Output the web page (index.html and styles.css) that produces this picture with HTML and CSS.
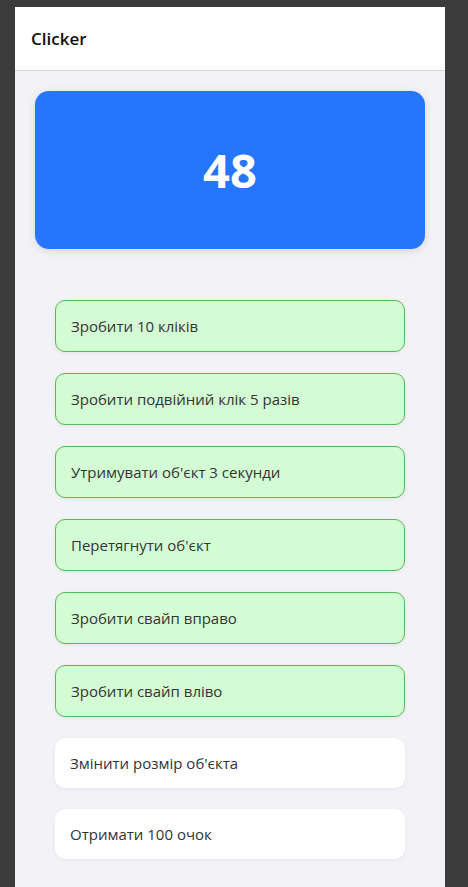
FILE: index.html
```html
<!DOCTYPE html>
<html lang="uk">
<head>
<meta charset="utf-8">
<link rel="stylesheet" href="styles.css">
</head>
<body>
<div class="app">
  <header class="header"><h1 class="title">Clicker</h1></header>
  <main class="content">
    <div class="counter">48</div>
    <ul class="tasks">
      <li class="task done">Зробити 10 кліків</li>
      <li class="task done">Зробити подвійний клік 5 разів</li>
      <li class="task done">Утримувати об'єкт 3 секунди</li>
      <li class="task done">Перетягнути об'єкт</li>
      <li class="task done">Зробити свайп вправо</li>
      <li class="task done">Зробити свайп вліво</li>
      <li class="task">Змінити розмір об'єкта</li>
      <li class="task">Отримати 100 очок</li>
    </ul>
  </main>
</div>
</body>
</html>
```
FILE: styles.css
```css
html, body {
  margin: 0;
  padding: 0;
  height: 100%;
}
body {
  background: #3b3b3b;
  font-family: "Open Sans", "Noto Sans", sans-serif;
  padding: 7px 23px 0 15px;
  box-sizing: border-box;
  overflow: hidden;
}
.app {
  background: #f2f2f7;
  min-height: 880px;
  width: 430px;
}
.header {
  background: #ffffff;
  height: 64px;
  border-bottom: 1px solid #d6d6d6;
  display: flex;
  align-items: center;
  padding-left: 16px;
  box-sizing: border-box;
}
.title {
  margin: 0;
  font-size: 17px;
  font-weight: 600;
  color: #111;
}
.content {
  padding: 20px 20px;
}
.counter {
  height: 158px;
  background: #2575fd;
  border-radius: 14px;
  box-shadow: 0 2px 8px rgba(0, 0, 0, 0.12);
  color: #fff;
  font-family: "Noto Sans", "Open Sans", sans-serif;
  font-weight: 700;
  font-size: 47px;
  display: flex;
  align-items: center;
  justify-content: center;
}
.tasks {
  list-style: none;
  margin: 51px 0 0;
  padding: 0 20px;
  display: flex;
  flex-direction: column;
  gap: 21px;
}
.task {
  background: #fff;
  border-radius: 10px;
  padding: 15px 15px;
  height: 50px;
  box-sizing: border-box;
  font-size: 15px;
  line-height: 20px;
  color: #333;
  display: flex;
  align-items: center;
  box-shadow: 0 1px 4px rgba(0, 0, 0, 0.06);
}
.task.done {
  background: #d4fcd4;
  border: 1px solid #55bb55;
  height: 52px;
}
```
